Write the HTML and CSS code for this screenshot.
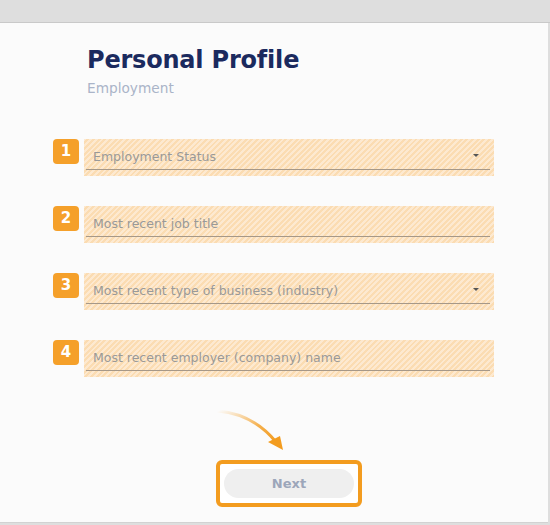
FILE: index.html
```html
<!DOCTYPE html>
<html lang="en">
<head>
    <meta charset="UTF-8">
    <meta name="viewport" content="width=device-width, initial-scale=1.0">
    <title>Personal Profile</title>
    <link rel="stylesheet" href="styles.css">
</head>
<body>
    <div class="topbar"></div>

    <div class="page">
        <div class="heading">
            <h1>Personal Profile</h1>
            <p class="subtitle">Employment</p>
        </div>

        <div class="fields">
            <div class="row">
                <span class="badge">1</span>
                <div class="field">
                    <div class="control select">Employment Status</div>
                </div>
            </div>
            <div class="row">
                <span class="badge">2</span>
                <div class="field">
                    <div class="control">Most recent job title</div>
                </div>
            </div>
            <div class="row">
                <span class="badge">3</span>
                <div class="field">
                    <div class="control select">Most recent type of business (industry)</div>
                </div>
            </div>
            <div class="row">
                <span class="badge">4</span>
                <div class="field">
                    <div class="control">Most recent employer (company) name</div>
                </div>
            </div>

            <div class="actions">
                <svg class="pointer" width="70" height="45" viewBox="0 0 70 45">
                    <defs>
                        <linearGradient id="fade" x1="0" y1="0" x2="1" y2="1">
                            <stop offset="0" stop-color="#f39c1f" stop-opacity="0"/>
                            <stop offset="0.6" stop-color="#f39c1f" stop-opacity="0.8"/>
                            <stop offset="1" stop-color="#f39c1f"/>
                        </linearGradient>
                    </defs>
                    <path d="M2 4 Q37 7 60 35" fill="none" stroke="url(#fade)" stroke-width="3" stroke-linecap="round"/>
                    <polygon points="52,35 67,43 64,29" fill="#f39c1f"/>
                </svg>
                <div class="highlight">
                    <button class="next">Next</button>
                </div>
            </div>
        </div>
    </div>
</body>
</html>
```

FILE: styles.css
```css
body {
    margin: 0;
    background: #dedede;
    font-family: 'DejaVu Sans', Verdana, sans-serif;
    color: #333;
}
.topbar {
    height: 22px;
    background: #dedede;
    border-bottom: 1px solid #c9c9c9;
}
.page {
    width: 548px;
    height: 500px;
    box-sizing: border-box;
    background: #fbfbfb;
    border-bottom: 1px solid #d2d2d2;
}
.heading {
    padding: 23px 0 0 87px;
}
h1 {
    margin: 0;
    font-size: 24px;
    line-height: 29px;
    color: #1b2a5e;
    letter-spacing: -0.2px;
}
.subtitle {
    margin: 5px 0 0;
    font-size: 13.7px;
    line-height: 17px;
    color: #aab4c8;
}
.fields {
    padding: 42px 0 0 53px;
}
.row {
    display: flex;
    gap: 5px;
    margin-bottom: 30px;
}
.badge {
    width: 26px;
    height: 25px;
    border-radius: 4px;
    background: #f5a02a;
    color: #fff;
    font-weight: bold;
    font-size: 15px;
    line-height: 25px;
    text-align: center;
}
.field {
    width: 410px;
    height: 37px;
    background: repeating-linear-gradient(-45deg, #fbdcb2 0, #fbdcb2 2px, #fde9d0 2px, #fde9d0 4px);
}
.control {
    position: relative;
    height: 20px;
    margin: 0 4px 0 2px;
    padding: 10px 0 0 7px;
    border-bottom: 1px solid #a69888;
    font-size: 12.5px;
    line-height: 15px;
    color: #999;
}
.select::after {
    content: '';
    position: absolute;
    right: 11px;
    top: 15px;
    border-left: 3px solid transparent;
    border-right: 3px solid transparent;
    border-top: 3px solid #555;
}
.actions {
    width: 410px;
    margin-left: 31px;
    display: flex;
    flex-direction: column;
    align-items: center;
}
.pointer {
    display: block;
    align-self: flex-start;
    margin-left: 132px;
}
.highlight {
    margin-top: 8px;
    padding: 5px 4px;
    border: 4px solid #f39c1f;
    border-radius: 6px;
    background: #fff;
}
.next {
    display: block;
    width: 130px;
    height: 29px;
    border: none;
    border-radius: 15px;
    background: #efefef;
    color: #9ca6ba;
    font-family: 'DejaVu Sans', Verdana, sans-serif;
    font-weight: bold;
    font-size: 13px;
}
```
